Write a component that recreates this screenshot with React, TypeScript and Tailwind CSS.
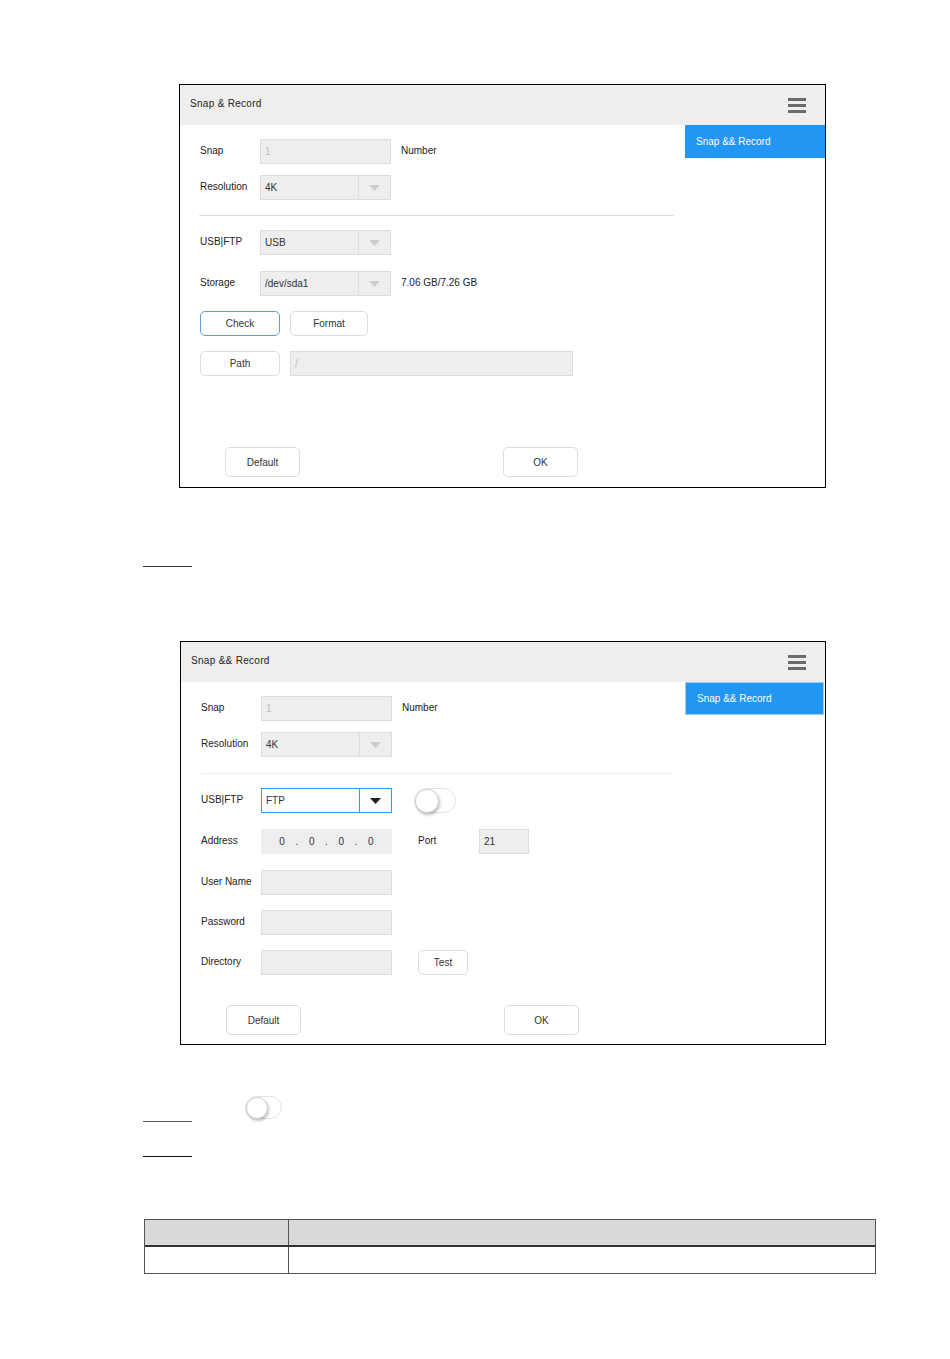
import React from 'react';

const font = "font-['Liberation_Sans',Arial,sans-serif]";

const Hamburger = () => (
  <div className="flex flex-col gap-[3px] w-[18px]">
    <div className="h-[3px] bg-[#6b6b6b]" />
    <div className="h-[3px] bg-[#6b6b6b]" />
    <div className="h-[3px] bg-[#6b6b6b]" />
  </div>
);

const Header = ({ title }: { title: string }) => (
  <div className="h-[40px] bg-[#eeeeee] flex items-center justify-between pl-[10px] pr-[19px]">
    <span className="text-[10px] text-[#222] tracking-[0.3px] pb-[3px]">{title}</span>
    <Hamburger />
  </div>
);

const Label = ({ children }: { children: React.ReactNode }) => (
  <span className="w-[60px] shrink-0 text-[10px] text-[#222] pb-[2px]">{children}</span>
);

const Input = ({ value, w = 'w-[131px]', muted }: { value?: string; w?: string; muted?: boolean }) => (
  <div className={`${w} h-[25px] bg-[#eeeeee] border border-[#dddddd] flex items-center px-[4px] text-[10px] ${muted ? 'text-[#bbbbbb]' : 'text-[#333]'}`}>
    {value}
  </div>
);

const Select = ({ value, active }: { value: string; active?: boolean }) => (
  <div className={`w-[131px] h-[25px] flex border ${active ? 'bg-white border-[#3b95e8]' : 'bg-[#eeeeee] border-[#dddddd]'}`}>
    <div className="flex-1 flex items-center px-[4px] text-[10px] text-[#333]">{value}</div>
    <div className={`w-[32px] flex items-center justify-center border-l ${active ? 'border-[#3b95e8]' : 'border-[#dddddd]'}`}>
      <svg width="11" height="6" viewBox="0 0 11 6">
        <path d="M0 0 L11 0 L5.5 6 Z" fill={active ? '#222' : '#cccccc'} />
      </svg>
    </div>
  </div>
);

const Button = ({ label, w = 'w-[80px]', h = 'h-[25px]', blue }: { label: string; w?: string; h?: string; blue?: boolean }) => (
  <div className={`${w} ${h} bg-white border rounded-[5px] flex items-center justify-center text-[10px] text-[#333] ${blue ? 'border-[#5aa0e8]' : 'border-[#dddddd]'}`}>
    {label}
  </div>
);

const Toggle = ({ w = 'w-[42px]', h = 'h-[25px]', knob = 'w-[24px] h-[24px]' }: { w?: string; h?: string; knob?: string }) => (
  <div className={`${w} ${h} rounded-full border border-[#e2e2e2] bg-white flex items-center`}>
    <div className={`${knob} rounded-full bg-white border border-[#d0d0d0] shadow-[1px_2px_3px_rgba(0,0,0,0.25)]`} />
  </div>
);

const Sidebar = ({ bordered }: { bordered?: boolean }) => (
  <div className="w-[140px] shrink-0">
    <div className={`h-[33px] bg-[#2196f3] flex items-center pl-[11px] text-[10px] text-white ${bordered ? 'border border-[#9ccbf5] mr-[1px]' : ''}`}>
      Snap &amp;&amp; Record
    </div>
  </div>
);

const Row = ({ children, mt }: { children: React.ReactNode; mt: string }) => (
  <div className={`flex items-center ${mt}`}>{children}</div>
);

const Footer = ({ mt }: { mt: string }) => (
  <div className={`flex ${mt} pl-[25px]`}>
    <Button label="Default" w="w-[75px]" h="h-[30px]" />
    <div className="ml-[203px]">
      <Button label="OK" w="w-[75px]" h="h-[30px]" />
    </div>
  </div>
);

const UsbPanel = () => (
  <div className="ml-[179px] w-[647px] border border-black">
    <Header title="Snap & Record" />
    <div className="flex">
      <div className="flex-1 pl-[20px] pb-[10px]">
        <Row mt="mt-[14px]">
          <Label>Snap</Label>
          <Input value="1" muted />
          <span className="ml-[10px] text-[10px] text-[#222] pb-[2px]">Number</span>
        </Row>
        <Row mt="mt-[11px]">
          <Label>Resolution</Label>
          <Select value="4K" />
        </Row>
        <div className="mt-[15px] mr-[11px] -ml-[1px] h-px bg-[#dddddd]" />
        <Row mt="mt-[14px]">
          <Label>USB|FTP</Label>
          <Select value="USB" />
        </Row>
        <Row mt="mt-[16px]">
          <Label>Storage</Label>
          <Select value="/dev/sda1" />
          <span className="ml-[10px] text-[10px] text-[#222] pb-[2px]">7.06 GB/7.26 GB</span>
        </Row>
        <Row mt="mt-[15px]">
          <Button label="Check" blue />
          <div className="ml-[10px]"><Button label="Format" w="w-[78px]" /></div>
        </Row>
        <Row mt="mt-[15px]">
          <Button label="Path" />
          <div className="ml-[10px]"><Input value="/" w="w-[283px]" muted /></div>
        </Row>
        <Footer mt="mt-[71px]" />
      </div>
      <Sidebar />
    </div>
  </div>
);

const FtpPanel = () => (
  <div className="ml-[180px] w-[646px] border border-black">
    <Header title="Snap && Record" />
    <div className="flex">
      <div className="flex-1 pl-[20px] pb-[9px]">
        <Row mt="mt-[14px]">
          <Label>Snap</Label>
          <Input value="1" muted />
          <span className="ml-[10px] text-[10px] text-[#222] pb-[2px]">Number</span>
        </Row>
        <Row mt="mt-[11px]">
          <Label>Resolution</Label>
          <Select value="4K" />
        </Row>
        <div className="mt-[16px] mr-[11px] h-px bg-[#eeeeee]" />
        <Row mt="mt-[14px]">
          <Label>USB|FTP</Label>
          <Select value="FTP" active />
          <div className="ml-[22px]"><Toggle /></div>
        </Row>
        <Row mt="mt-[16px]">
          <Label>Address</Label>
          <div className="w-[131px] h-[25px] bg-[#eeeeee] border border-[#eeeeee] flex items-center justify-around px-[12px] text-[10px] text-[#333]">
            <span>0</span><span>.</span><span>0</span><span>.</span><span>0</span><span>.</span><span>0</span>
          </div>
          <span className="ml-[26px] w-[61px] text-[10px] text-[#222] pb-[2px]">Port</span>
          <Input value="21" w="w-[50px]" />
        </Row>
        <Row mt="mt-[16px]">
          <Label>User Name</Label>
          <Input />
        </Row>
        <Row mt="mt-[15px]">
          <Label>Password</Label>
          <Input />
        </Row>
        <Row mt="mt-[15px]">
          <Label>Directory</Label>
          <Input />
          <div className="ml-[26px]"><Button label="Test" w="w-[50px]" /></div>
        </Row>
        <Footer mt="mt-[30px]" />
      </div>
      <Sidebar bordered />
    </div>
  </div>
);

export default function App() {
  return (
    <div className={`w-[950px] min-h-[1359px] bg-white pt-[84px] ${font}`}>
      <UsbPanel />
      <div className="ml-[143px] mt-[78px] w-[49px] h-px bg-[#333]" />
      <div className="mt-[74px]">
        <FtpPanel />
      </div>
      <div className="flex mt-[51px]">
        <div className="ml-[143px] w-[49px] h-px bg-[#555] mt-[25px]" />
        <div className="ml-[53px]">
          <Toggle w="w-[37px]" h="h-[23px]" knob="w-[22px] h-[22px]" />
        </div>
      </div>
      <div className="ml-[143px] mt-[34px] w-[49px] h-px bg-[#111]" />
      <div className="ml-[144px] mt-[62px] w-[732px] border border-[#555]">
        <div className="flex h-[27px] bg-[#d9d9d9] border-b-2 border-[#333]">
          <div className="w-[144px] border-r border-[#555]" />
          <div className="flex-1" />
        </div>
        <div className="flex h-[26px] bg-white">
          <div className="w-[144px] border-r border-[#555]" />
          <div className="flex-1" />
        </div>
      </div>
    </div>
  );
}
